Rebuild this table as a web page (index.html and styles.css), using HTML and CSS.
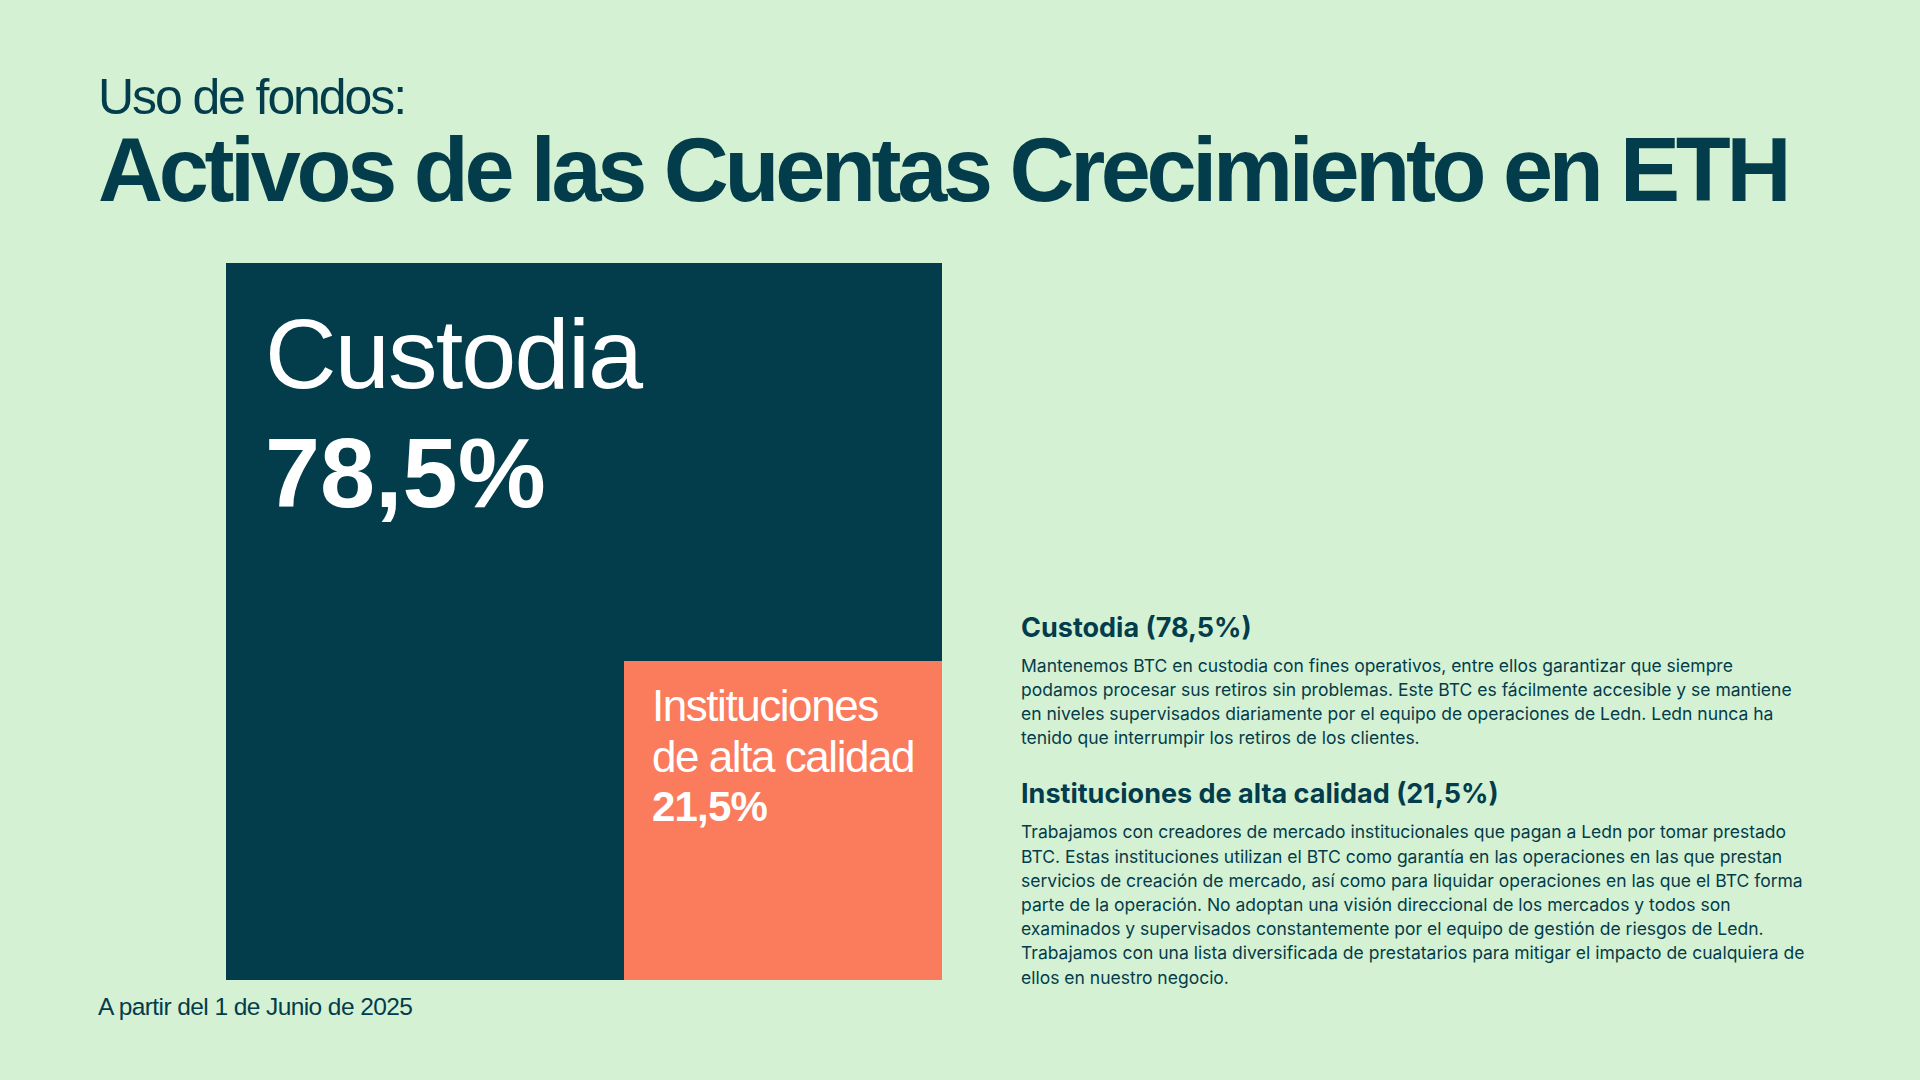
FILE: index.html
```html
<!DOCTYPE html>
<html lang="es">
<head>
<meta charset="utf-8">
<title>Uso de fondos: Activos de las Cuentas Crecimiento en ETH</title>
<link rel="stylesheet" href="styles.css">
</head>
<body>
<div class="slide">
  <header class="head">
    <p class="kicker">Uso de fondos:</p>
    <h1 class="title">Activos de las Cuentas Crecimiento en ETH</h1>
  </header>
  <main class="content">
    <div class="chart-col">
      <div class="treemap">
        <div class="tm-label">
          <div class="tm-name">Custodia</div>
          <div class="tm-pct">78,5%</div>
        </div>
        <div class="tm-tile">
          <div class="tile-name">Instituciones<br>de alta calidad</div>
          <div class="tile-pct">21,5%</div>
        </div>
      </div>
      <p class="asof">A partir del 1 de Junio de 2025</p>
    </div>
    <div class="notes">
      <h2 class="note-title">Custodia (78,5%)</h2>
      <p class="note-body">Mantenemos BTC en custodia con fines operativos, entre ellos garantizar que siempre<br>podamos procesar sus retiros sin problemas. Este BTC es fácilmente accesible y se mantiene<br>en niveles supervisados diariamente por el equipo de operaciones de Ledn. Ledn nunca ha<br>tenido que interrumpir los retiros de los clientes.</p>
      <h2 class="note-title note-title-2">Instituciones de alta calidad (21,5%)</h2>
      <p class="note-body">Trabajamos con creadores de mercado institucionales que pagan a Ledn por tomar prestado<br>BTC. Estas instituciones utilizan el BTC como garantía en las operaciones en las que prestan<br>servicios de creación de mercado, así como para liquidar operaciones en las que el BTC forma<br>parte de la operación. No adoptan una visión direccional de los mercados y todos son<br>examinados y supervisados constantemente por el equipo de gestión de riesgos de Ledn.<br>Trabajamos con una lista diversificada de prestatarios para mitigar el impacto de cualquiera de<br>ellos en nuestro negocio.</p>
    </div>
  </main>
</div>
</body>
</html>
```
FILE: styles.css
```css
* { box-sizing: border-box; }
html, body { margin: 0; padding: 0; }
body {
  background: #d5f1d4;
  color: #033c4a;
  font-family: "Liberation Sans", Arial, sans-serif;
}
.slide {
  width: 1920px;
  height: 1080px;
  padding: 72px 0 0 98px;
  overflow: hidden;
}
.kicker {
  margin: 0;
  font-size: 50px;
  line-height: 50px;
  font-weight: 400;
  letter-spacing: -2.1px;
}
.title {
  margin: 3px 0 0;
  font-size: 90px;
  line-height: 90px;
  font-weight: 700;
  letter-spacing: -4.3px;
}
.content {
  display: flex;
  margin-top: 48px;
}
.chart-col {
  width: 844px;
  flex: none;
}
.treemap {
  margin-left: 128px;
  width: 716px;
  height: 717px;
  background: #033c4a;
  display: flex;
  flex-direction: column;
  justify-content: space-between;
}
.tm-label {
  padding: 31px 0 0 39px;
  color: #ffffff;
  font-size: 99px;
  line-height: 119px;
}
.tm-name { font-weight: 400; letter-spacing: -1.8px; }
.tm-pct { font-weight: 700; }
.tm-tile {
  align-self: flex-end;
  width: 318px;
  height: 319px;
  background: #fb7b5d;
  color: #ffffff;
  padding: 20px 0 0 28px;
}
.tile-name {
  font-size: 44px;
  line-height: 50.5px;
  letter-spacing: -1.45px;
}
.tile-pct {
  font-size: 42px;
  line-height: 50.5px;
  font-weight: 700;
  letter-spacing: -0.8px;
}
.asof {
  margin: 12px 0 0;
  font-size: 24.5px;
  line-height: 29.4px;
  letter-spacing: -0.58px;
}
.notes {
  margin-left: 79px;
  padding-top: 348.6px;
  font-family: "Inter", sans-serif;
  white-space: nowrap;
}
.note-title {
  margin: 0;
  font-size: 27px;
  line-height: 32px;
  font-weight: 700;
}
.note-title-2 { margin-top: 28px; }
.note-body {
  margin: 10px 0 0;
  font-size: 17.5px;
  line-height: 24.2px;
  font-weight: 400;
}
```
